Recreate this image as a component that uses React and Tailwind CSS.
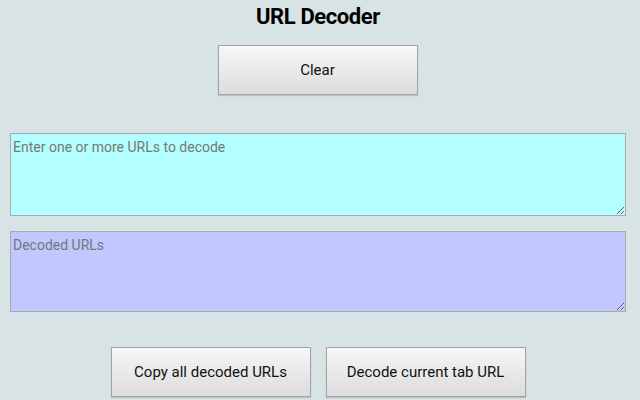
import React from 'react';

const Button = ({ children }) => (
  <button className="w-[200px] h-[50px] border border-[#a3a3a3] bg-gradient-to-b from-[#f7f7f7] to-[#dcdcdc] text-[15px] text-[#111] shadow-[0_1px_1px_rgba(0,0,0,0.15)]">
    {children}
  </button>
);

const App = () => {
  return (
    <div className="min-h-[400px] w-[640px] bg-[#d7e3e4] font-['Roboto',sans-serif] overflow-hidden">
      <div className="ml-[10px] w-[616px] flex flex-col items-center">
        <h1 className="h-[35px] pt-[3px] text-[22px] font-bold leading-[28px] tracking-[-0.4px] text-black">URL Decoder</h1>
        <div className="mt-[10px] ml-[-1px]">
          <Button>Clear</Button>
        </div>
        <textarea
          placeholder="Enter one or more URLs to decode"
          className="mt-[38px] block w-[616px] h-[83px] border border-[#a9a9a9] bg-[#b3ffff] px-[2px] pt-[3px] pb-[1px] text-[14px] placeholder:text-[#777] outline-none"
        />
        <textarea
          placeholder="Decoded URLs"
          className="mt-[15px] block w-[616px] h-[81px] border border-[#a9a9a9] bg-[#c0c8ff] px-[2px] pt-[3px] pb-[1px] text-[14px] placeholder:text-[#777] outline-none"
        />
        <div className="mt-[35px] flex gap-[15px]">
          <Button>Copy all decoded URLs</Button>
          <Button>Decode current tab URL</Button>
        </div>
      </div>
    </div>
  );
};

export default App;
